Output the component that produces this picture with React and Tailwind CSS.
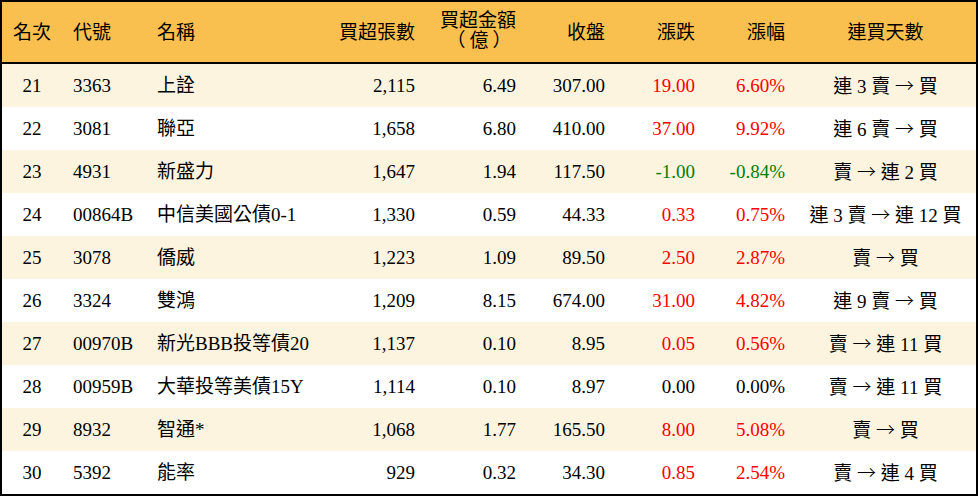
import React from "react";

const rows = [
  ["21", "3363", "上詮", "2,115", "6.49", "307.00", "19.00", "6.60%", "連 3 賣 → 買", "r"],
  ["22", "3081", "聯亞", "1,658", "6.80", "410.00", "37.00", "9.92%", "連 6 賣 → 買", "r"],
  ["23", "4931", "新盛力", "1,647", "1.94", "117.50", "-1.00", "-0.84%", "賣 → 連 2 買", "g"],
  ["24", "00864B", "中信美國公債0-1", "1,330", "0.59", "44.33", "0.33", "0.75%", "連 3 賣 → 連 12 買", "r"],
  ["25", "3078", "僑威", "1,223", "1.09", "89.50", "2.50", "2.87%", "賣 → 買", "r"],
  ["26", "3324", "雙鴻", "1,209", "8.15", "674.00", "31.00", "4.82%", "連 9 賣 → 買", "r"],
  ["27", "00970B", "新光BBB投等債20", "1,137", "0.10", "8.95", "0.05", "0.56%", "賣 → 連 11 買", "r"],
  ["28", "00959B", "大華投等美債15Y", "1,114", "0.10", "8.97", "0.00", "0.00%", "賣 → 連 11 買", "k"],
  ["29", "8932", "智通*", "1,068", "1.77", "165.50", "8.00", "5.08%", "賣 → 買", "r"],
  ["30", "5392", "能率", "929", "0.32", "34.30", "0.85", "2.54%", "賣 → 連 4 買", "r"],
];

const colorCls = { r: "text-[#ff0000]", g: "text-[#008000]", k: "text-black" };

function Streak({ text }) {
  const [a, b] = text.split(" → ");
  return (
    <>
      {a}{" "}
      <span style={{ fontFamily: '"Noto Sans CJK TC", sans-serif' }} className="font-light">→</span>
      {" "}{b}
    </>
  );
}

export default function App() {
  return (
    <div
      className="w-[978px] h-[496px] border-2 border-black bg-white text-black text-[19px] leading-none"
      style={{ fontFamily: '"Liberation Serif", "Noto Sans CJK TC", serif' }}
    >
      <div className="flex h-[62px] bg-[#f9c04f] border-b-2 border-black items-center">
        <div className="w-[60px] text-center">名次</div>
        <div className="w-[84px] pl-[11px]">代號</div>
        <div className="w-[184px] pl-[11px]">名稱</div>
        <div className="w-[95px] pr-[10px] text-right">買超張數</div>
        <div className="w-[101px] pr-[10px] flex justify-end">
          <div className="flex flex-col items-center leading-[20px] -mt-[2px]">
            <span>買超金額</span>
            <span className="pl-[6px] tracking-[4px]">（億）</span>
          </div>
        </div>
        <div className="w-[89px] pr-[10px] text-right">收盤</div>
        <div className="w-[90px] pr-[10px] text-right">漲跌</div>
        <div className="w-[90px] pr-[10px] text-right">漲幅</div>
        <div className="w-[181px] text-center">連買天數</div>
      </div>
      {rows.map((r, i) => (
        <div
          key={r[0]}
          className={`flex h-[43px] items-center ${i % 2 === 0 ? "bg-[#fdf4e0]" : "bg-white"}`}
        >
          <div className="w-[60px] text-center">{r[0]}</div>
          <div className="w-[84px] pl-[11px]">{r[1]}</div>
          <div className="w-[184px] pl-[11px] whitespace-nowrap">{r[2]}</div>
          <div className="w-[95px] pr-[10px] text-right">{r[3]}</div>
          <div className="w-[101px] pr-[10px] text-right">{r[4]}</div>
          <div className="w-[89px] pr-[10px] text-right">{r[5]}</div>
          <div className={`w-[90px] pr-[10px] text-right ${colorCls[r[9]]}`}>{r[6]}</div>
          <div className={`w-[90px] pr-[10px] text-right ${colorCls[r[9]]}`}>{r[7]}</div>
          <div className="w-[181px] text-center whitespace-nowrap">
            <Streak text={r[8]} />
          </div>
        </div>
      ))}
    </div>
  );
}
